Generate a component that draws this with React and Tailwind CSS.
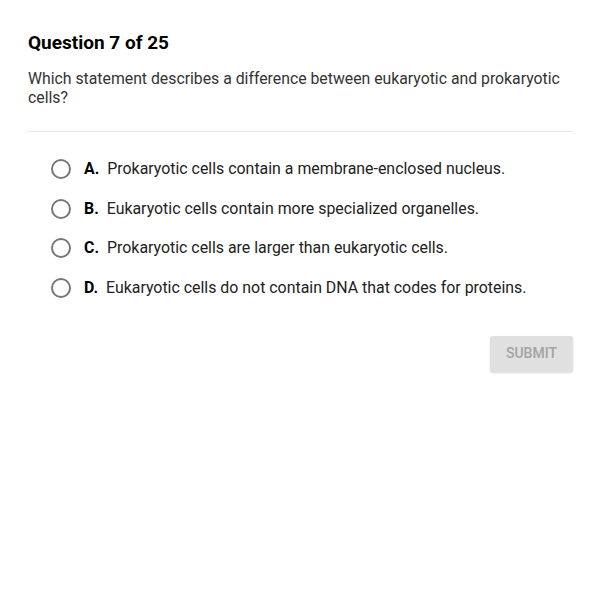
const options = [
  { letter: "A.", text: "Prokaryotic cells contain a membrane-enclosed nucleus." },
  { letter: "B.", text: "Eukaryotic cells contain more specialized organelles." },
  { letter: "C.", text: "Prokaryotic cells are larger than eukaryotic cells." },
  { letter: "D.", text: "Eukaryotic cells do not contain DNA that codes for proteins." },
];

export default function App() {
  return (
    <div className="min-h-[593px] w-[592px] bg-white px-[28px] pt-[31px] font-['Roboto',sans-serif] text-[#222]">
      <h1 className="text-[19px] font-bold leading-[24px] text-black">Question 7 of 25</h1>
      <p className="mt-[14px] text-[15.8px] leading-[19px] text-[#333]">
        Which statement describes a difference between eukaryotic and prokaryotic cells?
      </p>
      <div className="mt-[24px] h-px w-[545px] bg-[#e8e8e8]" />
      <ul className="mt-[27px] flex flex-col gap-[19.5px] pl-[23px]">
        {options.map((o) => (
          <li key={o.letter} className="flex h-[20px] items-center">
            <span className="h-[20px] w-[20px] rounded-full border-2 border-[#777]" />
            <span className="ml-[13px] text-[15.9px] font-bold text-black">{o.letter}</span>
            <span className="ml-[8px] text-[15.9px] text-[#222]">{o.text}</span>
          </li>
        ))}
      </ul>
      <div className="mt-[38px] flex w-[545px] justify-end">
        <button className="h-[36px] w-[83px] rounded-[3px] bg-[#e0e0e0] text-[14px] font-medium text-[#a3a3a3] shadow-[0_1px_2px_rgba(0,0,0,0.15)]">
          SUBMIT
        </button>
      </div>
    </div>
  );
}
